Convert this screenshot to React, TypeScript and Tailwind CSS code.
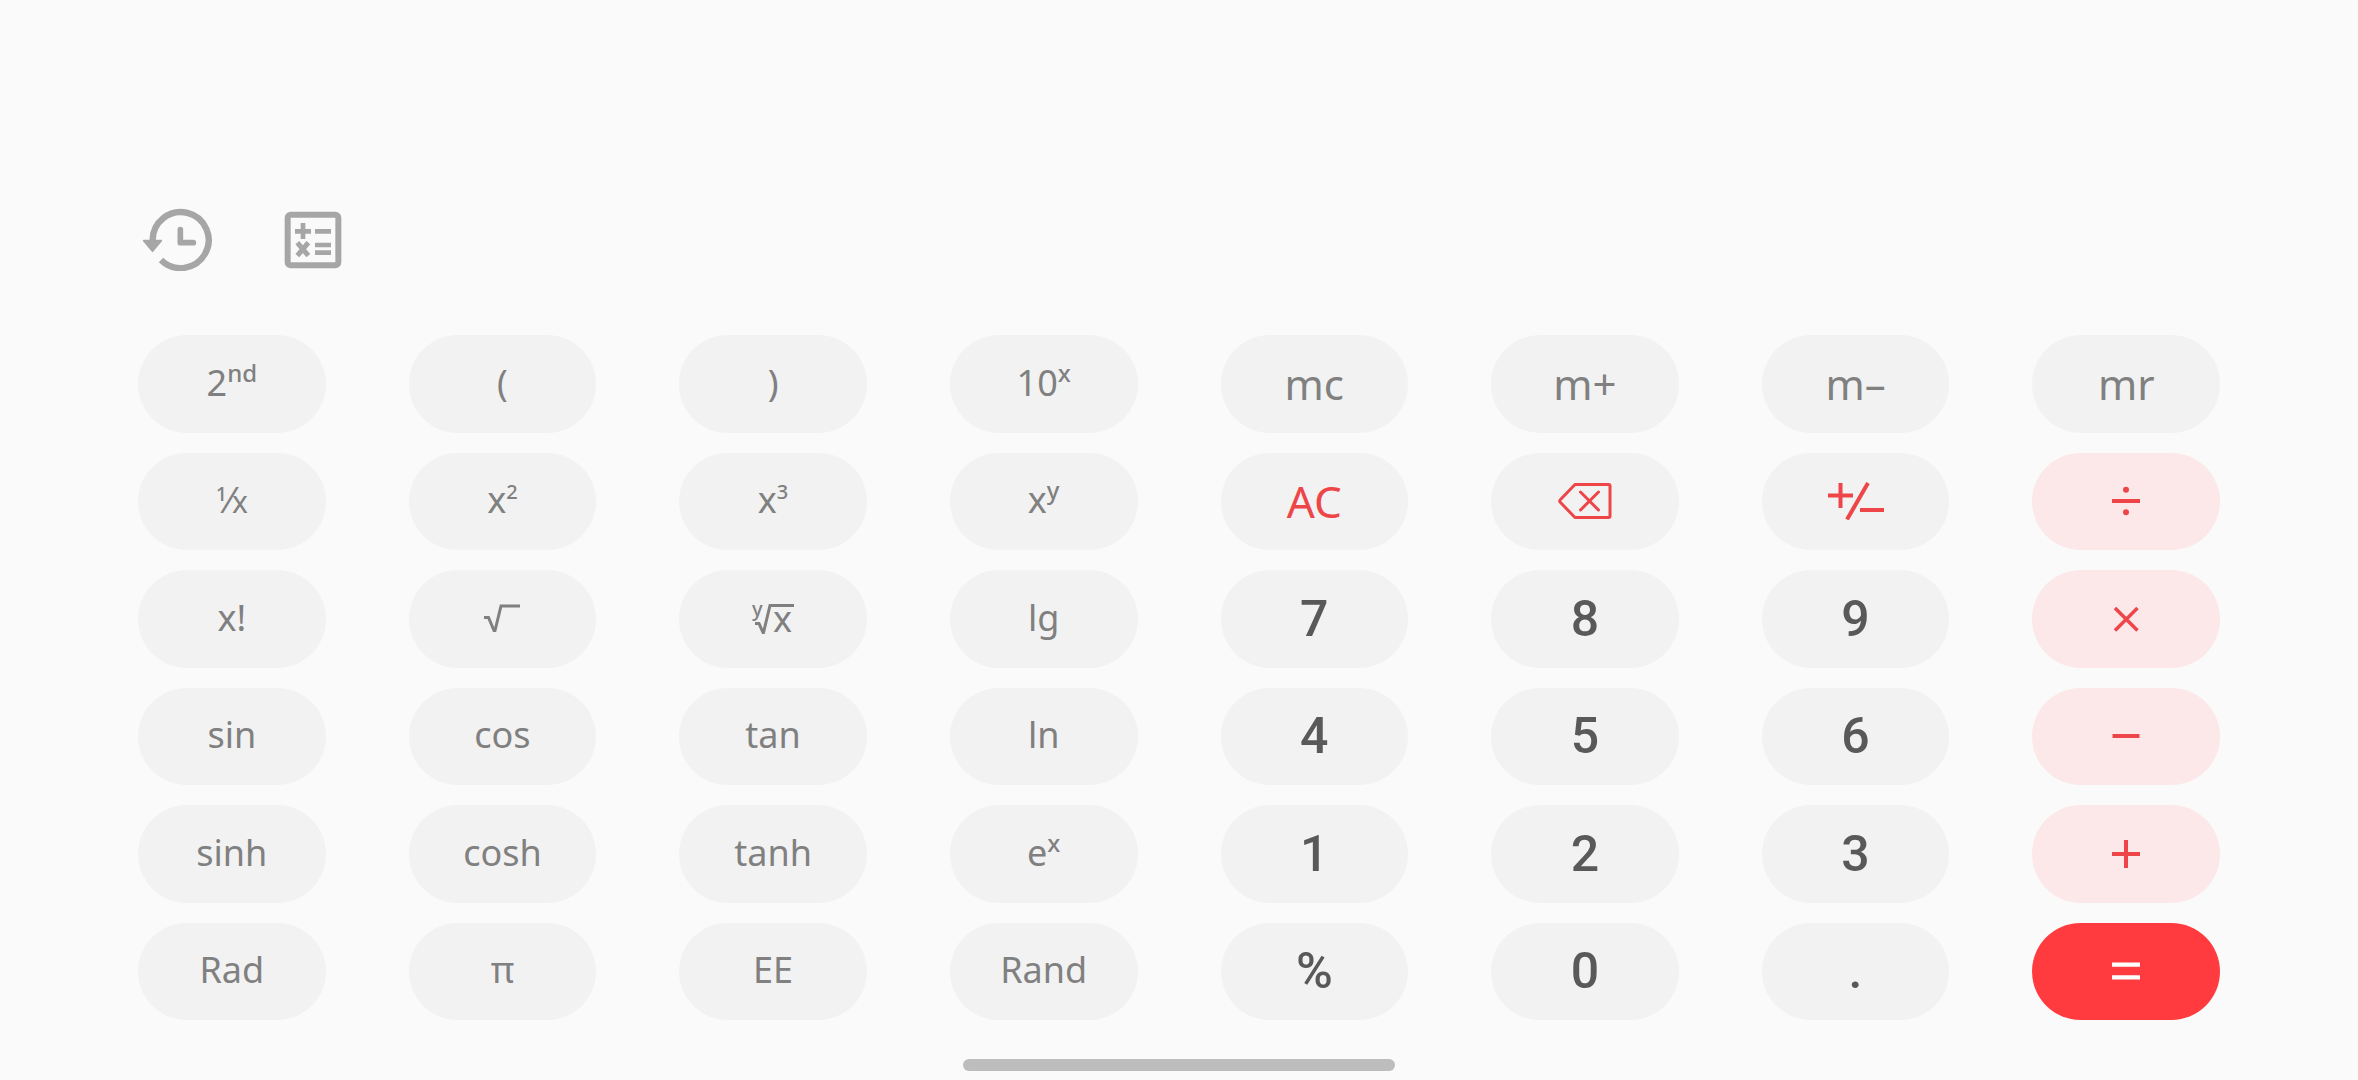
import type { ReactNode } from "react";

type Variant = "fn" | "memory" | "action" | "digit" | "operator" | "equals";

type Key = {
  id: string;
  variant: Variant;
  label?: ReactNode;
};

const variants: Record<Variant, string> = {
  fn: "bg-[#f2f2f2] pb-0.5 text-4xl text-[#808080]",
  memory: "bg-[#f2f2f2] text-[42px] text-[#808080]",
  action: "bg-[#f2f2f2] text-[44px] text-[#ee4548]",
  digit: "bg-[#f2f2f2] font-[Roboto,sans-serif] text-[50px] font-medium text-[#595959]",
  operator: "bg-[#fce8e8] text-[#ee4548]",
  equals: "bg-[#ff3b3f] text-white",
};

function Power({ base, exp }: { base: string; exp: string }) {
  return (
    <span className="flex items-baseline">
      {base}
      <span className="relative -top-3.5 text-2xl leading-none font-medium">
        {exp}
      </span>
    </span>
  );
}

function Square({ base, exp }: { base: string; exp: string }) {
  return (
    <span className="flex items-baseline">
      {base}
      <span className="relative -top-3.5 text-xl leading-none font-medium">
        {exp}
      </span>
    </span>
  );
}

function Reciprocal() {
  return (
    <span className="flex items-baseline">
      <span className="relative -top-3 text-xl leading-none font-medium">1</span>
      <span>⁄</span>
      <span className="text-3xl leading-none">x</span>
    </span>
  );
}

function SquareRoot() {
  return (
    <svg width="36" height="28" viewBox="0 0 36 28" fill="none" stroke="currentColor" strokeWidth="3">
      <path d="M0 13.5h4.5L10 26.5h1L17 2h19" />
    </svg>
  );
}

function NthRoot() {
  return (
    <svg width="44" height="36" viewBox="0 0 44 36" fill="none" stroke="currentColor" className="overflow-visible">
      <path d="M4 23.500h4l4 9h.5L19 5.500h24" strokeWidth="3" />
      <text x="1" y="16" fontSize="20" fontWeight="500" fill="currentColor" stroke="none">
        y
      </text>
      <text x="22" y="32" fontSize="36" fill="currentColor" stroke="none">
        x
      </text>
    </svg>
  );
}

function Backspace() {
  return (
    <svg width="54" height="38" viewBox="0 0 54 38" fill="none" stroke="currentColor" strokeWidth="3" strokeLinejoin="round">
      <path d="M17 2.5h33.5q1.5 0 1.5 1.5v30q0 1.5-1.5 1.5H17L2.3 20.3q-1.2-1.3 0-2.6z" />
      <path d="M22.5 10l18 18M40.5 10l-18 18" strokeLinecap="round" />
    </svg>
  );
}

function PlusMinus() {
  return (
    <svg width="56" height="38" viewBox="0 0 56 38" fill="none" stroke="currentColor" strokeWidth="4">
      <path d="M0 13.5h25M12.5 1v25M32 28h24" />
      <path d="M19 37.5L40 1" />
    </svg>
  );
}

function Divide() {
  return (
    <svg width="30" height="30" viewBox="0 0 30 30" fill="currentColor">
      <path d="M1 13h28v4H1z" />
      <circle cx="15" cy="3.7" r="3" />
      <circle cx="15" cy="26.3" r="3" />
    </svg>
  );
}

function Multiply() {
  return (
    <svg width="30" height="30" viewBox="0 0 30 30" fill="none" stroke="currentColor" strokeWidth="3.5">
      <path d="M4 4l22.5 22.5M26.5 4L4 26.5" />
    </svg>
  );
}

function Minus() {
  return (
    <svg width="30" height="30" viewBox="0 0 30 30" fill="currentColor">
      <path d="M1.5 13h27v4h-27z" />
    </svg>
  );
}

function Plus() {
  return (
    <svg width="30" height="30" viewBox="0 0 30 30" fill="currentColor">
      <path d="M1 13h28v4H1zM13 1h4v28h-4z" />
    </svg>
  );
}

function Equals() {
  return (
    <svg width="30" height="30" viewBox="0 0 30 30" fill="currentColor">
      <path d="M1 6.5h28v4.3H1zM1 19.3h28v4.3H1z" />
    </svg>
  );
}

function HistoryIcon() {
  return (
    <svg width="70" height="63" viewBox="66 54 210 189" fill="none" stroke="currentColor">
      <path d="M98 152A84 84 0 1 1 123 210" strokeWidth="19" />
      <path d="M71 152h53l-26.5 32z" fill="currentColor" strokeWidth="5" strokeLinejoin="round" />
      <path d="M181 119v39h39" strokeWidth="17" strokeLinecap="round" strokeLinejoin="round" />
    </svg>
  );
}

function ConverterIcon() {
  return (
    <svg width="58" height="58" viewBox="492 63 174 174" fill="none" stroke="currentColor">
      <rect x="503" y="74" width="152" height="152" rx="9" strokeWidth="18" />
      <path d="M525 124h48M549 99v48M585 124h48M585 165h48M585 188h48" strokeWidth="14" />
      <path d="M532 158l33 39M565 158l-33 39" strokeWidth="15" />
    </svg>
  );
}

const keys: Key[] = [
  { id: "second", variant: "fn", label: <Power base="2" exp="nd" /> },
  { id: "(", variant: "fn" },
  { id: ")", variant: "fn" },
  { id: "ten to the x", variant: "fn", label: <Power base="10" exp="x" /> },
  { id: "mc", variant: "memory" },
  { id: "m+", variant: "memory" },
  { id: "m–", variant: "memory" },
  { id: "mr", variant: "memory" },

  { id: "reciprocal", variant: "fn", label: <Reciprocal /> },
  { id: "square", variant: "fn", label: <Square base="x" exp="2" /> },
  { id: "cube", variant: "fn", label: <Square base="x" exp="3" /> },
  { id: "x to the y", variant: "fn", label: <Power base="x" exp="y" /> },
  { id: "AC", variant: "action" },
  { id: "backspace", variant: "action", label: <Backspace /> },
  { id: "plus or minus", variant: "action", label: <PlusMinus /> },
  { id: "divide", variant: "operator", label: <Divide /> },

  { id: "x!", variant: "fn" },
  { id: "square root", variant: "fn", label: <SquareRoot /> },
  { id: "yth root of x", variant: "fn", label: <NthRoot /> },
  { id: "lg", variant: "fn" },
  { id: "7", variant: "digit" },
  { id: "8", variant: "digit" },
  { id: "9", variant: "digit" },
  { id: "multiply", variant: "operator", label: <Multiply /> },

  { id: "sin", variant: "fn" },
  { id: "cos", variant: "fn" },
  { id: "tan", variant: "fn" },
  { id: "ln", variant: "fn" },
  { id: "4", variant: "digit" },
  { id: "5", variant: "digit" },
  { id: "6", variant: "digit" },
  { id: "minus", variant: "operator", label: <Minus /> },

  { id: "sinh", variant: "fn" },
  { id: "cosh", variant: "fn" },
  { id: "tanh", variant: "fn" },
  { id: "e to the x", variant: "fn", label: <Power base="e" exp="x" /> },
  { id: "1", variant: "digit" },
  { id: "2", variant: "digit" },
  { id: "3", variant: "digit" },
  { id: "plus", variant: "operator", label: <Plus /> },

  { id: "Rad", variant: "fn" },
  { id: "π", variant: "fn" },
  { id: "EE", variant: "fn" },
  { id: "Rand", variant: "fn" },
  { id: "%", variant: "digit" },
  { id: "0", variant: "digit" },
  { id: ".", variant: "digit" },
  { id: "equals", variant: "equals", label: <Equals /> },
];

export default function App() {
  return (
    <main className="flex min-h-screen flex-col bg-[#fafafa] px-[138px] pt-52 pb-[9px] font-['Noto_Sans',sans-serif]">
      <div className="flex items-center gap-[72px] pl-1 text-[#a6a6a6]">
        <button type="button" aria-label="History">
          <HistoryIcon />
        </button>
        <button type="button" aria-label="Converter">
          <ConverterIcon />
        </button>
      </div>

      <div className="mt-16 grid flex-1 auto-rows-fr grid-cols-8 gap-x-[83px] gap-y-5">
        {keys.map(({ id, variant, label }) => (
          <button
            key={id}
            type="button"
            aria-label={label ? id : undefined}
            className={`flex items-center justify-center rounded-full leading-none ${variants[variant]}`}
          >
            {label ?? id}
          </button>
        ))}
      </div>

      <div className="mt-[39px] h-3 w-[432px] self-center rounded-full bg-[#bdbdbd]" />
    </main>
  );
}
